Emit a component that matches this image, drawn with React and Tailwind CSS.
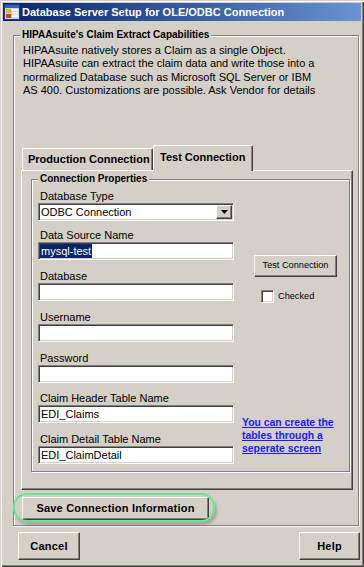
const raised =
  "border border-t-white border-l-white border-r-[#404040] border-b-[#404040] shadow-[inset_-1px_-1px_0_#808080]";
const sunken =
  "border border-t-[#808080] border-l-[#808080] border-r-white border-b-white shadow-[inset_1px_1px_0_#404040,inset_-1px_-1px_0_#d4d0c8]";
const etched =
  "border border-[#808080] shadow-[inset_1px_1px_0_#ffffff,1px_1px_0_#ffffff]";

function AppIcon() {
  return (
    <svg width="16" height="16" viewBox="0 0 16 16">
      <rect x="0.5" y="0.5" width="15" height="15" fill="#c8d8f0" stroke="#1c3a8c" />
      <rect x="1" y="1" width="14" height="3" fill="#2f5fc8" />
      <rect x="2" y="5" width="5" height="4" fill="#f7b51c" />
      <rect x="2" y="10" width="5" height="4" fill="#e0401c" />
      <rect x="8" y="5" width="6" height="2" fill="#ffffff" />
      <rect x="8" y="8" width="6" height="2" fill="#ffffff" />
      <rect x="8" y="11" width="6" height="2" fill="#ffffff" />
    </svg>
  );
}

function Field({ label, className, children }) {
  return (
    <div className={"flex flex-col " + (className || "")}>
      <div className="h-[14px] leading-[14px] pl-[2px] text-[11px] text-black whitespace-nowrap">{label}</div>
      {children}
    </div>
  );
}

function TextBox({ value }) {
  return (
    <div className={"h-[18px] w-[196px] bg-white flex items-center pl-[2px] text-[11px] text-black " + sunken}>
      {value}
    </div>
  );
}

export default function App() {
  return (
    <div className="w-[364px] h-[567px] bg-[#d4d0c8] flex flex-col pt-[3px] px-[3px] overflow-hidden font-['Liberation_Sans',Arial,sans-serif] shadow-[inset_1px_1px_0_#d4d0c8,inset_2px_2px_0_#ffffff,inset_-1px_-1px_0_#404040,inset_-2px_-2px_0_#808080]">
      {/* Title bar */}
      <div className="h-[18px] shrink-0 flex items-center bg-linear-to-r from-[#0a246a] to-[#6a92d4]">
        <div className="ml-[1px] w-[16px] h-[16px] flex">
          <AppIcon />
        </div>
        <div className="ml-[2px] text-white font-bold text-[11px] font-['Liberation_Sans_Narrow','Liberation_Sans',Arial,sans-serif] whitespace-nowrap">
          Database Server Setup for OLE/ODBC Connection
        </div>
      </div>

      {/* Outer group */}
      <div className={"relative mt-[14px] ml-[10px] w-[346px] h-[491px] shrink-0 " + etched}>
        <span className="absolute left-[6px] top-[-7px] px-[2px] bg-[#d4d0c8] text-[10px] leading-[12px] font-bold text-black whitespace-nowrap">
          HIPAAsuite's Claim Extract Capabilities
        </span>

        <div className="pt-[8px] pl-[9px] h-[61px] text-[11px] leading-[13.4px] text-black whitespace-nowrap">
          <div>HIPAAsuite natively stores a Claim as a single Object.</div>
          <div>HIPAAsuite can extract the claim data and write those into a</div>
          <div>normalized Database such as Microsoft SQL Server or IBM</div>
          <div>AS 400. Customizations are possible. Ask Vendor for details</div>
        </div>

        {/* Tabs */}
        <div className="mt-[48px] ml-[7px] pl-[1px] h-[25px] flex items-end">
          <div className="h-[22px] w-[131px] flex items-center pl-[5px] border-t border-l border-r border-t-white border-l-white border-r-[#404040] rounded-tl-[2px] rounded-tr-[2px] shadow-[inset_-1px_0_0_#808080] text-[11px] font-bold text-black whitespace-nowrap">
            Production Connection
          </div>
          <div className="relative z-10 mb-[-1px] h-[26px] w-[100px] flex items-center pl-[6px] pb-[2px] bg-[#d4d0c8] border-t border-l border-r border-t-white border-l-white border-r-[#404040] rounded-tl-[2px] rounded-tr-[2px] shadow-[inset_-1px_0_0_#808080] text-[11px] font-bold text-black whitespace-nowrap">
            Test Connection
          </div>
        </div>

        {/* Tab panel */}
        <div className={"ml-[7px] w-[332px] h-[320px] " + raised}>
          <div className={"relative mt-[8px] ml-[9px] w-[319px] h-[293px] " + etched}>
            <span className="absolute left-[6px] top-[-7px] px-[2px] bg-[#d4d0c8] text-[10px] leading-[12px] font-bold text-black whitespace-nowrap">
              Connection Properties
            </span>

            <div className="flex pl-[6px]">
              <div className="w-[196px] flex flex-col pt-[9px]">
                <Field label="Database Type">
                  <div className={"h-[18px] w-[196px] bg-white flex items-center text-[11px] text-black " + sunken}>
                    <span className="pl-[2px]">ODBC Connection</span>
                    <div className={"ml-auto mr-[1px] w-[16px] h-[14px] bg-[#d4d0c8] flex items-center justify-center " + raised}>
                      <svg width="7" height="4" viewBox="0 0 7 4">
                        <polygon points="0,0 7,0 3.5,4" fill="#000" />
                      </svg>
                    </div>
                  </div>
                </Field>
                <Field label="Data Source Name" className="mt-[7px]">
                  <div className={"h-[18px] w-[196px] bg-white flex items-center pl-[1px] text-[11px] " + sunken}>
                    <span className="bg-[#0a246a] text-white px-[1px] h-[14px] leading-[14px]">mysql-test</span>
                  </div>
                </Field>
                <Field label="Database" className="mt-[9px]">
                  <TextBox value="" />
                </Field>
                <Field label="Username" className="mt-[9px]">
                  <TextBox value="" />
                </Field>
                <Field label="Password" className="mt-[9px]">
                  <TextBox value="" />
                </Field>
                <Field label="Claim Header Table Name" className="mt-[8px]">
                  <TextBox value="EDI_Claims" />
                </Field>
                <Field label="Claim Detail Table Name" className="mt-[9px]">
                  <TextBox value="EDI_ClaimDetail" />
                </Field>
              </div>

              <div className="ml-[8px] flex flex-col">
                <div className={"mt-[75px] ml-[12px] w-[83px] h-[22px] flex items-center justify-center text-[9.2px] text-black whitespace-nowrap " + raised}>
                  Test Connection
                </div>
                <div className="mt-[13px] ml-[19px] flex items-center">
                  <div className={"w-[13px] h-[13px] bg-white " + sunken}></div>
                  <span className="ml-[4px] text-[9.2px] text-black">Checked</span>
                </div>
                <div className="mt-[112px] text-[10.4px] leading-[13px] font-bold text-[#1a1aff] underline whitespace-nowrap">
                  You can create the
                  <br />
                  tables through a
                  <br />
                  seperate screen
                </div>
              </div>
            </div>
          </div>
        </div>

        {/* Save button */}
        <div className={"relative mt-[7px] ml-[8px] w-[187px] h-[23px] flex items-center justify-center text-[11px] font-bold tracking-[0.2px] text-black whitespace-nowrap " + raised}>
          Save Connection Information
          <div className="pointer-events-none absolute left-[-10px] right-[-7px] top-[-5px] bottom-[-3px] rounded-[14px] border-2 border-[#66e88f] shadow-[2px_3px_3px_rgba(0,0,0,0.22)]"></div>
        </div>
      </div>

      {/* Bottom buttons */}
      <div className="mt-[6px] flex justify-between pl-[15px] pr-[1px]">
        <div className={"w-[62px] h-[28px] flex items-center justify-center text-[11px] font-bold tracking-[0.2px] text-black " + raised}>
          Cancel
        </div>
        <div className={"w-[61px] h-[28px] flex items-center justify-center text-[11px] font-bold tracking-[0.2px] text-black " + raised}>
          Help
        </div>
      </div>
    </div>
  );
}
